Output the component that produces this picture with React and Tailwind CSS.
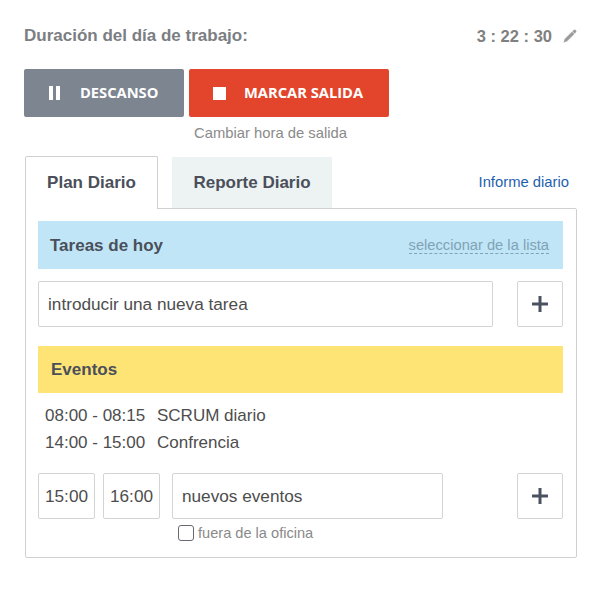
import { Pencil } from "lucide-react";

function PlusButton() {
  return (
    <button
      type="button"
      className="flex h-[46px] w-[46px] shrink-0 items-center justify-center rounded-[2px] border border-[#d4d4d4] bg-white"
      aria-label="Agregar"
    >
      <svg width="16" height="16" viewBox="0 0 16 16" aria-hidden="true">
        <path d="M8 0v16M0 8h16" stroke="#4a5161" strokeWidth="3" fill="none" />
      </svg>
    </button>
  );
}

function Box({ className = "", children }) {
  return (
    <div
      className={
        "flex h-[46px] items-center rounded-[2px] border border-[#d4d4d4] bg-white pt-[1px] text-[17.2px] text-[#4d4d4d] " +
        className
      }
    >
      {children}
    </div>
  );
}

export default function App() {
  return (
    <div className="h-[589px] w-[600px] bg-white pl-[24px] pr-[23px] pt-[26px] font-['Liberation_Sans',Arial,sans-serif]">
      <div className="flex h-[20px] items-center justify-between">
        <span className="text-[17px] font-bold text-[#7b7e82]">
          Duración del día de trabajo:
        </span>
        <span className="flex items-center text-[16.5px] font-bold text-[#808080]">
          <span>3 : 22 : 30</span>
          <Pencil className="ml-[10px] mr-[-1px]" size={16} fill="#9a9a9a" stroke="#ffffff" strokeWidth={1} />
        </span>
      </div>

      <div className="mt-[23px] flex gap-[5px]">
        <button
          type="button"
          className="flex h-[48px] w-[160px] items-center rounded-[2px] bg-[#7d8590] pl-[25px] font-['Open_Sans',sans-serif] text-[14.7px] font-bold text-white"
        >
          <svg width="11" height="14" viewBox="0 0 11 14" className="mr-[20px]" aria-hidden="true">
            <path d="M0 0h4v14H0zM7 0h4v14H7z" fill="#ffffff" />
          </svg>
          <span className="-translate-y-[1px]">DESCANSO</span>
        </button>
        <button
          type="button"
          className="flex h-[48px] w-[200px] items-center rounded-[2px] bg-[#e2452b] pl-[24px] font-['Open_Sans',sans-serif] text-[14.7px] font-bold text-white"
        >
          <span className="mr-[18px] h-[13px] w-[13px] bg-white" />
          <span className="-translate-y-[1px]">MARCAR SALIDA</span>
        </button>
      </div>

      <div className="mt-[7px] pl-[170px] text-[14.8px] leading-[18px] text-[#8a8a8a]">
        Cambiar hora de salida
      </div>

      <div className="ml-[1px] mt-[14px] flex h-[52px] items-stretch">
        <div className="relative z-10 flex h-[53px] w-[133px] items-center justify-center rounded-t-[2px] border border-b-0 border-[#d0d0d0] bg-white text-[17px] font-bold text-[#4a4f5a]">
          Plan Diario
        </div>
        <div className="ml-[14px] mt-[1px] flex w-[160px] items-center justify-center bg-[#edf3f3] text-[17px] font-bold text-[#4a4f5a]">
          Reporte Diario
        </div>
        <a className="ml-auto mr-[8px] self-center text-[14.8px] text-[#1f5fae]">Informe diario</a>
      </div>

      <div className="ml-[1px] h-[350px] rounded-[2px] border border-[#d0d0d0] pl-[12px] pr-[13px] pt-[12px]">
        <div className="flex h-[48px] items-center justify-between bg-[#c0e5f7] pl-[12px] pr-[14px] pt-[1px]">
          <span className="text-[17px] font-bold text-[#4a4f5a]">Tareas de hoy</span>
          <span className="border-b border-dashed border-[#7fa3b5] text-[14.7px] leading-[16px] text-[#7fa3b5]">
            seleccionar de la lista
          </span>
        </div>

        <div className="mt-[12px] flex justify-between">
          <Box className="w-[455px] pl-[9px]">introducir una nueva tarea</Box>
          <PlusButton />
        </div>

        <div className="mt-[19px] flex h-[47px] items-center bg-[#fee475] pl-[13px] pt-[1px] text-[17px] font-bold text-[#4a4f5a]">
          Eventos
        </div>

        <div className="mt-[9px] pl-[7px] text-[17px] leading-[27px] text-[#4d4d4d]">
          <div className="flex">
            <span className="w-[112px]">08:00 - 08:15</span>
            <span>SCRUM diario</span>
          </div>
          <div className="flex">
            <span className="w-[112px]">14:00 - 15:00</span>
            <span>Confrencia</span>
          </div>
        </div>

        <div className="mt-[17px] flex">
          <Box className="w-[57px] justify-center">15:00</Box>
          <Box className="ml-[8px] w-[57px] justify-center">16:00</Box>
          <Box className="ml-[12px] w-[271px] pl-[9px]">nuevos eventos</Box>
          <div className="ml-auto">
            <PlusButton />
          </div>
        </div>

        <div className="mt-[5px] flex items-center pl-[140px] text-[14.6px] leading-[18px] text-[#8a8a8a]">
          <span className="mr-[4px] h-[16px] w-[16px] rounded-[3px] border border-[#666a70] bg-white" />
          fuera de la oficina
        </div>
      </div>
    </div>
  );
}
